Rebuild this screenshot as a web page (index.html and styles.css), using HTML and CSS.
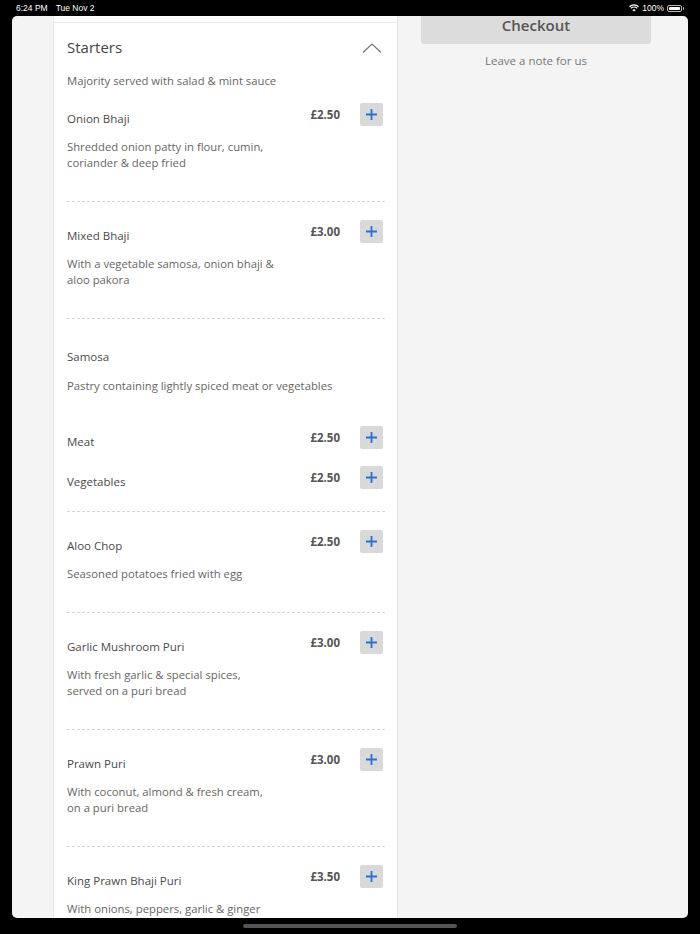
FILE: index.html
```html
<!DOCTYPE html>
<html>
<head>
<meta charset="utf-8">
<link rel="stylesheet" href="styles.css">
</head>
<body>
<div class="device">
  <div class="statusbar">
    <div class="sb-left"><span>6:24 PM</span><span>Tue Nov 2</span></div>
    <div class="sb-right">
      <svg class="wifi" width="10" height="8" viewBox="0 0 10 8"><path d="M5 7.6 L3.4 5.9 A2.3 2.3 0 0 1 6.6 5.9 Z" fill="#fff"/><path d="M1.9 4.3 A4.4 4.4 0 0 1 8.1 4.3" stroke="#fff" stroke-width="1.2" fill="none"/><path d="M0.4 2.7 A6.6 6.6 0 0 1 9.6 2.7" stroke="#fff" stroke-width="1.2" fill="none"/></svg>
      <span>100%</span>
      <span class="battery"><span class="battery-fill"></span></span>
    </div>
  </div>
  <div class="screen">
    <div class="menu-col">
      <div class="prev-card"></div>
      <div class="card">
        <div class="card-head">
          <div class="card-title">Starters</div>
          <svg class="chevron" width="20" height="10" viewBox="0 0 20 10"><path d="M1 9.5 L10 1 L19 9.5" stroke="#777" stroke-width="1.2" fill="none"/></svg>
        </div>
        <div class="card-sub">Majority served with salad &amp; mint sauce</div>

        <div class="item first">
          <div class="item-row"><div class="item-name">Onion Bhaji</div><div class="price">£2.50</div><button class="add"><svg width="11" height="11" viewBox="0 0 11 11"><path d="M5.5 0 V11 M0 5.5 H11" stroke="#2a6fd4" stroke-width="1.8"/></svg></button></div>
          <div class="desc">Shredded onion patty in flour, cumin,<br>coriander &amp; deep fried</div>
        </div>

        <div class="item">
          <div class="item-row"><div class="item-name">Mixed Bhaji</div><div class="price">£3.00</div><button class="add"><svg width="11" height="11" viewBox="0 0 11 11"><path d="M5.5 0 V11 M0 5.5 H11" stroke="#2a6fd4" stroke-width="1.8"/></svg></button></div>
          <div class="desc">With a vegetable samosa, onion bhaji &amp;<br>aloo pakora</div>
        </div>

        <div class="item group">
          <div class="group-name">Samosa</div>
          <div class="desc">Pastry containing lightly spiced meat or vegetables</div>
          <div class="options">
            <div class="item-row"><div class="item-name">Meat</div><div class="price">£2.50</div><button class="add"><svg width="11" height="11" viewBox="0 0 11 11"><path d="M5.5 0 V11 M0 5.5 H11" stroke="#2a6fd4" stroke-width="1.8"/></svg></button></div>
            <div class="item-row"><div class="item-name">Vegetables</div><div class="price">£2.50</div><button class="add"><svg width="11" height="11" viewBox="0 0 11 11"><path d="M5.5 0 V11 M0 5.5 H11" stroke="#2a6fd4" stroke-width="1.8"/></svg></button></div>
          </div>
        </div>

        <div class="item">
          <div class="item-row"><div class="item-name">Aloo Chop</div><div class="price">£2.50</div><button class="add"><svg width="11" height="11" viewBox="0 0 11 11"><path d="M5.5 0 V11 M0 5.5 H11" stroke="#2a6fd4" stroke-width="1.8"/></svg></button></div>
          <div class="desc">Seasoned potatoes fried with egg</div>
        </div>

        <div class="item">
          <div class="item-row"><div class="item-name">Garlic Mushroom Puri</div><div class="price">£3.00</div><button class="add"><svg width="11" height="11" viewBox="0 0 11 11"><path d="M5.5 0 V11 M0 5.5 H11" stroke="#2a6fd4" stroke-width="1.8"/></svg></button></div>
          <div class="desc">With fresh garlic &amp; special spices,<br>served on a puri bread</div>
        </div>

        <div class="item">
          <div class="item-row"><div class="item-name">Prawn Puri</div><div class="price">£3.00</div><button class="add"><svg width="11" height="11" viewBox="0 0 11 11"><path d="M5.5 0 V11 M0 5.5 H11" stroke="#2a6fd4" stroke-width="1.8"/></svg></button></div>
          <div class="desc">With coconut, almond &amp; fresh cream,<br>on a puri bread</div>
        </div>

        <div class="item">
          <div class="item-row"><div class="item-name">King Prawn Bhaji Puri</div><div class="price">£3.50</div><button class="add"><svg width="11" height="11" viewBox="0 0 11 11"><path d="M5.5 0 V11 M0 5.5 H11" stroke="#2a6fd4" stroke-width="1.8"/></svg></button></div>
          <div class="desc">With onions, peppers, garlic &amp; ginger</div>
        </div>
      </div>
    </div>
    <div class="side-col">
      <button class="checkout">Checkout</button>
      <div class="note">Leave a note for us</div>
    </div>
  </div>
  <div class="home-bar"><div class="home-indicator"></div></div>
</div>
</body>
</html>
```
FILE: styles.css
```css
* { box-sizing: border-box; }
html, body { margin: 0; padding: 0; background: #000; }
body { font-family: "Open Sans", "Noto Sans", sans-serif; }
.device { width: 700px; height: 934px; display: flex; flex-direction: column; overflow: hidden; }
.statusbar {
  height: 16px; flex: none; display: flex; justify-content: space-between; align-items: center;
  padding: 0 16px; color: #fff; font-family: "Liberation Sans", sans-serif; font-size: 8.5px;
}
.sb-left { display: flex; gap: 8px; }
.sb-right { display: flex; align-items: center; gap: 3px; }
.battery { width: 15px; height: 7px; border: 1px solid #bbb; border-radius: 2px; padding: 1px; position: relative; margin-right: 2px; }
.battery::after { content: ""; position: absolute; right: -3px; top: 1.5px; width: 1.5px; height: 2.5px; background: #bbb; border-radius: 0 1px 1px 0; }
.battery-fill { display: block; width: 100%; height: 100%; background: #fff; border-radius: 1px; }
.screen {
  flex: none; height: 902px; margin: 0 12px; border-radius: 5px; overflow: hidden;
  background: #f4f4f4; display: flex; padding-left: 41px;
}
.menu-col {
  width: 345px; flex: none; background: #fff; border-left: 1px solid #e9e9e9; border-right: 1px solid #e4e4e4;
  overflow: hidden;
}
.prev-card { height: 7px; border-bottom: 1px solid #e8e8e8; }
.card { padding: 0 14px 0 13px; color: #555; }
.card-head { display: flex; justify-content: space-between; align-items: center; padding-top: 14px; height: 34px; }
.card-title { font-size: 15px; line-height: 20px; color: #444; }
.chevron { margin-right: 1px; margin-top: 2px; }
.card-sub { font-size: 11.3px; line-height: 16px; color: #666; margin-top: 16px; }
.item { padding: 18px 0 30px; border-bottom: 1px dashed #d6d6d6; margin-right: -2px; padding-right: 2px; }
.item.first { padding-top: 14px; }
.item-row { display: flex; align-items: center; height: 23px; }
.item-name { flex: 1; font-size: 11.5px; line-height: 16px; font-weight: 500; color: #4a4a4a; padding-top: 8px; }
.price { font-size: 11.5px; font-weight: 700; color: #555; margin-right: 20px; }
.add {
  width: 23px; height: 23px; border: none; padding: 0; margin: 0; background: #d9d9d9; border-radius: 2px;
  display: flex; align-items: center; justify-content: center;
}
.desc { margin-top: 13px; font-size: 11.3px; line-height: 16px; color: #666; }
.group { padding-top: 30px; padding-bottom: 22px; }
.group-name { font-size: 11.5px; line-height: 16px; font-weight: 500; color: #4a4a4a; }
.options { margin-top: 32px; display: flex; flex-direction: column; gap: 17px; }
.side-col { flex: 1; padding: 0 37px 0 23px; display: flex; flex-direction: column; align-items: stretch; }
.checkout {
  height: 28px; border: none; background: #dcdcdc; border-radius: 0 0 3px 3px;
  font-family: inherit; font-size: 15px; font-weight: 600; color: #555; line-height: 14px;
  padding: 2px 0 12px;
}
.note { text-align: center; font-size: 11.5px; color: #777; margin-top: 9px; line-height: 16px; }
.home-bar { flex: 1; display: flex; justify-content: center; padding-top: 6px; }
.home-indicator { width: 214px; height: 4px; border-radius: 2px; background: #555; }
```
